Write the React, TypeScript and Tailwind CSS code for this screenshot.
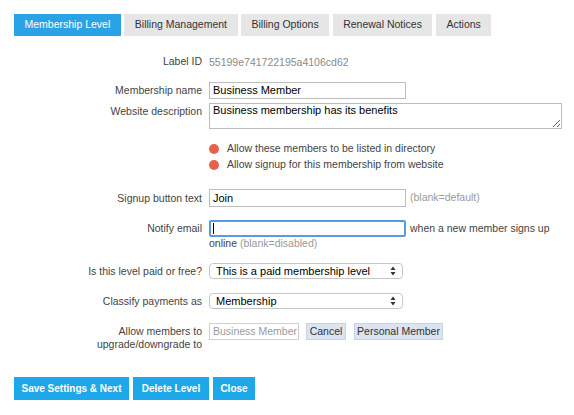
import React from 'react';

const tabs = ['Membership Level', 'Billing Management', 'Billing Options', 'Renewal Notices', 'Actions'];

function Label({ children }: { children: React.ReactNode }) {
  return <div className="w-[188px] shrink-0 text-right leading-[13px]">{children}</div>;
}

function UpDown() {
  return (
    <svg width="6" height="10" viewBox="0 0 6 10" className="text-[#333]">
      <path d="M3 0.5 L5.5 4 L0.5 4 Z" fill="currentColor" />
      <path d="M3 9.5 L5.5 6 L0.5 6 Z" fill="currentColor" />
    </svg>
  );
}

function FakeSelect({ value }: { value: string }) {
  return (
    <div className="flex h-[16px] w-[194px] items-center justify-between rounded-[4px] border border-[#c6c6c6] bg-white pl-[6px] pr-[6px] text-[11px] text-black">
      <span>{value}</span>
      <UpDown />
    </div>
  );
}

export default function App() {
  return (
    <div className="h-[415px] w-[574px] overflow-hidden bg-white font-['Liberation_Sans',Arial,sans-serif] text-[10.5px] text-[#444]">
      {/* Tabs */}
      <div className="flex gap-[3.5px] pl-[14px] pt-[14px]">
        {tabs.map((t, i) => (
          <div
            key={t}
            className={
              i === 0
                ? 'flex h-[22px] items-center bg-[#2aa3e6] px-[10.5px] text-white'
                : 'flex h-[22px] items-center bg-[#e6e6e6] px-[10.5px] text-[#333]'
            }
          >
            {t}
          </div>
        ))}
      </div>

      <div className="pl-[14px]">
        {/* Label ID */}
        <div className="mt-[19px] flex gap-[7px] leading-[14px]">
          <Label>Label ID</Label>
          <div className="text-[#8a8a8a]">55199e741722195a4106cd62</div>
        </div>

        {/* Membership name */}
        <div className="mt-[13px] flex items-center gap-[7px]">
          <Label>Membership name</Label>
          <div className="flex h-[17px] w-[197px] items-center border border-[#bdbdbd] px-[3px] text-[11px] text-black">
            Business Member
          </div>
        </div>

        {/* Website description */}
        <div className="mt-[4px] flex items-start gap-[7px]">
          <div className="w-[188px] shrink-0 pt-[2px] text-right leading-[13px]">Website description</div>
          <textarea
            readOnly
            defaultValue="Business membership has its benefits"
            className="h-[26px] w-[353px] resize border border-[#bdbdbd] px-[3px] py-0 text-[11px] leading-[13px] text-black outline-none"
          />
        </div>

        {/* Radios */}
        <div className="mt-[12px] flex flex-col">
          <div className="flex h-[16px] items-center">
            <div className="w-[195px] shrink-0" />
            <span className="h-[10px] w-[10px] rounded-full bg-[#e8604c]" />
            <span className="ml-[8px]">Allow these members to be listed in directory</span>
          </div>
          <div className="flex h-[16px] items-center">
            <div className="w-[195px] shrink-0" />
            <span className="h-[10px] w-[10px] rounded-full bg-[#e8604c]" />
            <span className="ml-[8px]">Allow signup for this membership from website</span>
          </div>
        </div>

        {/* Signup button text */}
        <div className="mt-[16px] flex items-center gap-[7px]">
          <Label>Signup button text</Label>
          <div className="flex h-[18px] w-[197px] items-center border border-[#bdbdbd] px-[3px] text-[11px] text-black">
            Join
          </div>
          <span className="ml-[-3px] text-[#9a9a9a]">(blank=default)</span>
        </div>

        {/* Notify email */}
        <div className="mt-[13px] flex items-center gap-[7px]">
          <Label>Notify email</Label>
          <div className="flex h-[17px] w-[197px] items-center rounded-[2px] border-2 border-[#5a9ae0] px-[2px]">
            <span className="h-[11px] w-[1px] bg-black" />
          </div>
          <span className="ml-[-3px]">when a new member signs up</span>
        </div>
        <div className="flex leading-[13px]">
          <div className="w-[195px] shrink-0" />
          <span>
            online <span className="text-[#9a9a9a]">(blank=disabled)</span>
          </span>
        </div>

        {/* Paid or free */}
        <div className="mt-[13px] flex items-center gap-[7px]">
          <Label>Is this level paid or free?</Label>
          <FakeSelect value="This is a paid membership level" />
        </div>

        {/* Classify */}
        <div className="mt-[14px] flex items-center gap-[7px]">
          <Label>Classify payments as</Label>
          <FakeSelect value="Membership" />
        </div>

        {/* Upgrade/downgrade */}
        <div className="mt-[14px] flex items-start gap-[7px]">
          <div className="w-[188px] shrink-0 pt-[2px] text-right leading-[13px]">
            Allow members to
            <br />
            upgrade/downgrade to
          </div>
          <div className="flex items-center">
            <div className="flex h-[17px] w-[90px] items-center overflow-hidden whitespace-nowrap border border-[#cfcfcf] px-[3px] text-[10.5px] text-[#9a9a9a]">
              Business Member
            </div>
            <div className="ml-[7px] flex h-[17px] w-[40px] items-center justify-center border border-[#c9d3e0] bg-[#dbe4f0] text-[#333]">
              Cancel
            </div>
            <div className="ml-[8px] flex h-[17px] w-[89px] items-center justify-center border border-[#c9d3e0] bg-[#dbe4f0] text-[#333]">
              Personal Member
            </div>
          </div>
        </div>
      </div>

      {/* Bottom buttons */}
      <div className="mt-[26px] flex gap-[4px] pl-[14px]">
        <button className="h-[23px] w-[115px] bg-[#1ea7e9] text-[10px] font-bold text-white">Save Settings &amp; Next</button>
        <button className="h-[23px] w-[76px] bg-[#1ea7e9] text-[10px] font-bold text-white">Delete Level</button>
        <button className="h-[23px] w-[42px] bg-[#1ea7e9] text-[10px] font-bold text-white">Close</button>
      </div>
    </div>
  );
}
